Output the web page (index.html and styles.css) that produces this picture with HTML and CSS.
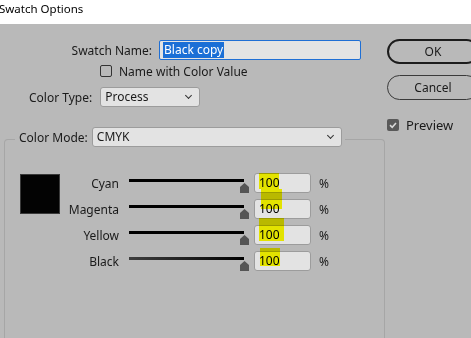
FILE: index.html
```html
<!DOCTYPE html>
<html lang="en">
<head>
    <meta charset="UTF-8">
    <title>Swatch Options</title>
    <link rel="stylesheet" href="styles.css">
</head>
<body>
    <div class="titlebar">Swatch Options</div>
    <div class="main">
        <div class="left">
            <div class="name-row">
                <label class="name-label">Swatch Name:</label>
                <div class="text-input"><span class="selected">Black copy</span></div>
            </div>
            <div class="check-row">
                <span class="box"></span>
                <span>Name with Color Value</span>
            </div>
            <div class="type-row">
                <label>Color Type:</label>
                <div class="select type-select">Process<span class="chev"></span></div>
            </div>
            <div class="frame">
                <div class="frame-head">
                    <label>Color Mode:</label>
                    <div class="select mode-select">CMYK<span class="chev"></span></div>
                </div>
                <div class="mix">
                    <div class="swatch"></div>
                    <div class="channels">
                        <div class="channel">
                            <span class="ch-label">Cyan</span>
                            <div class="slider"><span class="track"></span><svg class="thumb" width="9" height="10" viewBox="0 0 9 10"><polygon points="4.5,0 9,4 9,10 0,10 0,4" fill="#555"/></svg></div>
                            <div class="num">100<span class="mark" style="top:-1px;left:4px;width:20px;height:16px"></span></div>
                            <span class="pct">%</span>
                        </div>
                        <div class="channel">
                            <span class="ch-label">Magenta</span>
                            <div class="slider"><span class="track"></span><svg class="thumb" width="9" height="10" viewBox="0 0 9 10"><polygon points="4.5,0 9,4 9,10 0,10 0,4" fill="#555"/></svg></div>
                            <div class="num">100<span class="mark" style="top:-11px;left:6px;width:21px;height:20px"></span></div>
                            <span class="pct">%</span>
                        </div>
                        <div class="channel">
                            <span class="ch-label">Yellow</span>
                            <div class="slider"><span class="track"></span><svg class="thumb" width="9" height="10" viewBox="0 0 9 10"><polygon points="4.5,0 9,4 9,10 0,10 0,4" fill="#555"/></svg></div>
                            <div class="num">100<span class="mark" style="top:-8px;left:4px;width:25px;height:23px"></span></div>
                            <span class="pct">%</span>
                        </div>
                        <div class="channel">
                            <span class="ch-label">Black</span>
                            <div class="slider"><span class="track black"></span><svg class="thumb" width="9" height="10" viewBox="0 0 9 10"><polygon points="4.5,0 9,4 9,10 0,10 0,4" fill="#555"/></svg></div>
                            <div class="num">100<span class="mark" style="top:-4px;left:5px;width:20px;height:18px"></span></div>
                            <span class="pct">%</span>
                        </div>
                    </div>
                </div>
            </div>
        </div>
        <div class="right">
            <button class="btn ok">OK</button>
            <button class="btn">Cancel</button>
            <div class="preview">
                <span class="pbox"><svg width="12" height="12" viewBox="0 0 12 12"><path d="M3 6.2 L5.2 8.3 L9 4" fill="none" stroke="#d8d8d8" stroke-width="1.6"/></svg></span>
                <span>Preview</span>
            </div>
        </div>
    </div>
</body>
</html>
```

FILE: styles.css
```css
body {
    margin: 0;
    background: #b9b9b9;
    font-family: "Noto Sans", sans-serif;
    font-size: 12px;
    color: #1a1a1a;
    overflow: hidden;
    height: 338px;
}
.titlebar {
    height: 24px;
    background: #fff;
    font-size: 11.5px;
    line-height: 18px;
    margin-left: -1px;
    color: #000;
}
.main {
    display: flex;
    gap: 2px;
}
.left {
    width: 385px;
    padding-top: 16px;
    flex: none;
}
.name-row {
    display: flex;
    align-items: center;
    height: 20px;
}
.name-label {
    width: 152px;
    text-align: right;
    margin-right: 7px;
}
.text-input {
    width: 197px;
    height: 18px;
    border: 1px solid #1f6fd4;
    border-radius: 2px;
    background: #e3e3e3;
    display: flex;
    align-items: center;
    padding-left: 3px;
    box-sizing: content-box;
}
.selected {
    background: #1b6fd6;
    color: #fff;
    line-height: 16px;
    padding: 0 1px;
}
.check-row {
    display: flex;
    align-items: center;
    height: 16px;
    margin-top: 3px;
    padding-left: 100px;
    gap: 7px;
}
.box {
    width: 10px;
    height: 10px;
    border: 1px solid #333;
    border-radius: 2px;
}
.type-row {
    display: flex;
    align-items: center;
    margin-top: 8px;
    padding-left: 29px;
    gap: 8px;
}
.select {
    position: relative;
    height: 18px;
    line-height: 18px;
    border: 1px solid #9c9c9c;
    border-radius: 3px;
    background: #e3e3e3;
    padding-left: 4px;
    box-sizing: content-box;
}
.type-select {
    width: 94px;
}
.mode-select {
    width: 244px;
}
.chev {
    position: absolute;
    right: 8px;
    top: 5px;
    width: 4px;
    height: 4px;
    border-right: 1px solid #333;
    border-bottom: 1px solid #333;
    transform: rotate(45deg);
}
.frame {
    margin: 32px 0 0 4px;
    height: 220px;
    border: 1px solid #a6a6a6;
    border-bottom: none;
    border-radius: 4px 4px 0 0;
}
.frame-head {
    display: flex;
    width: fit-content;
    align-items: center;
    gap: 4px;
    margin: -13px 0 0 10px;
    padding: 0 3px 0 4px;
    background: #b9b9b9;
}
.mix {
    display: flex;
    margin-top: 26px;
    padding-left: 15px;
}
.swatch {
    width: 38px;
    height: 38px;
    margin-top: 1px;
    background: #030303;
    border: 1px solid #3a3a3a;
}
.channels {
    display: flex;
    flex-direction: column;
    gap: 6px;
}
.channel {
    display: flex;
    align-items: center;
    height: 20px;
}
.ch-label {
    width: 59px;
    text-align: right;
    margin-right: 10px;
}
.slider {
    position: relative;
    width: 121px;
    height: 20px;
    margin-right: 4px;
}
.track {
    position: absolute;
    left: 0;
    top: 6px;
    width: 115px;
    height: 3px;
    background: #000;
}
.track.black {
    background: linear-gradient(to right, #3e3e3e, #000);
}
.thumb {
    position: absolute;
    left: 111px;
    top: 10px;
}
.num {
    position: relative;
    width: 51px;
    height: 18px;
    line-height: 18px;
    padding-left: 4px;
    background: #e3e3e3;
    border: 1px solid #9c9c9c;
    border-radius: 3px;
    color: #000;
}
.mark {
    position: absolute;
    background: #ffff00;
    mix-blend-mode: multiply;
}
.pct {
    margin-left: 8px;
}
.right {
    padding-top: 15px;
    display: flex;
    flex-direction: column;
    align-items: flex-start;
}
.btn {
    width: 92px;
    height: 25px;
    border: 1px solid #3a3a3a;
    border-radius: 13px;
    background: transparent;
    font-family: "Noto Sans", sans-serif;
    font-size: 12px;
    color: #1a1a1a;
    padding: 0;
    margin-bottom: 11px;
}
.btn.ok {
    border: 2px solid #1c1c1c;
}
.preview {
    display: flex;
    align-items: center;
    gap: 7px;
    margin-top: 5px;
    font-size: 13px;
}
.pbox {
    width: 12px;
    height: 12px;
    background: #595959;
    border-radius: 2px;
    display: flex;
}
```
